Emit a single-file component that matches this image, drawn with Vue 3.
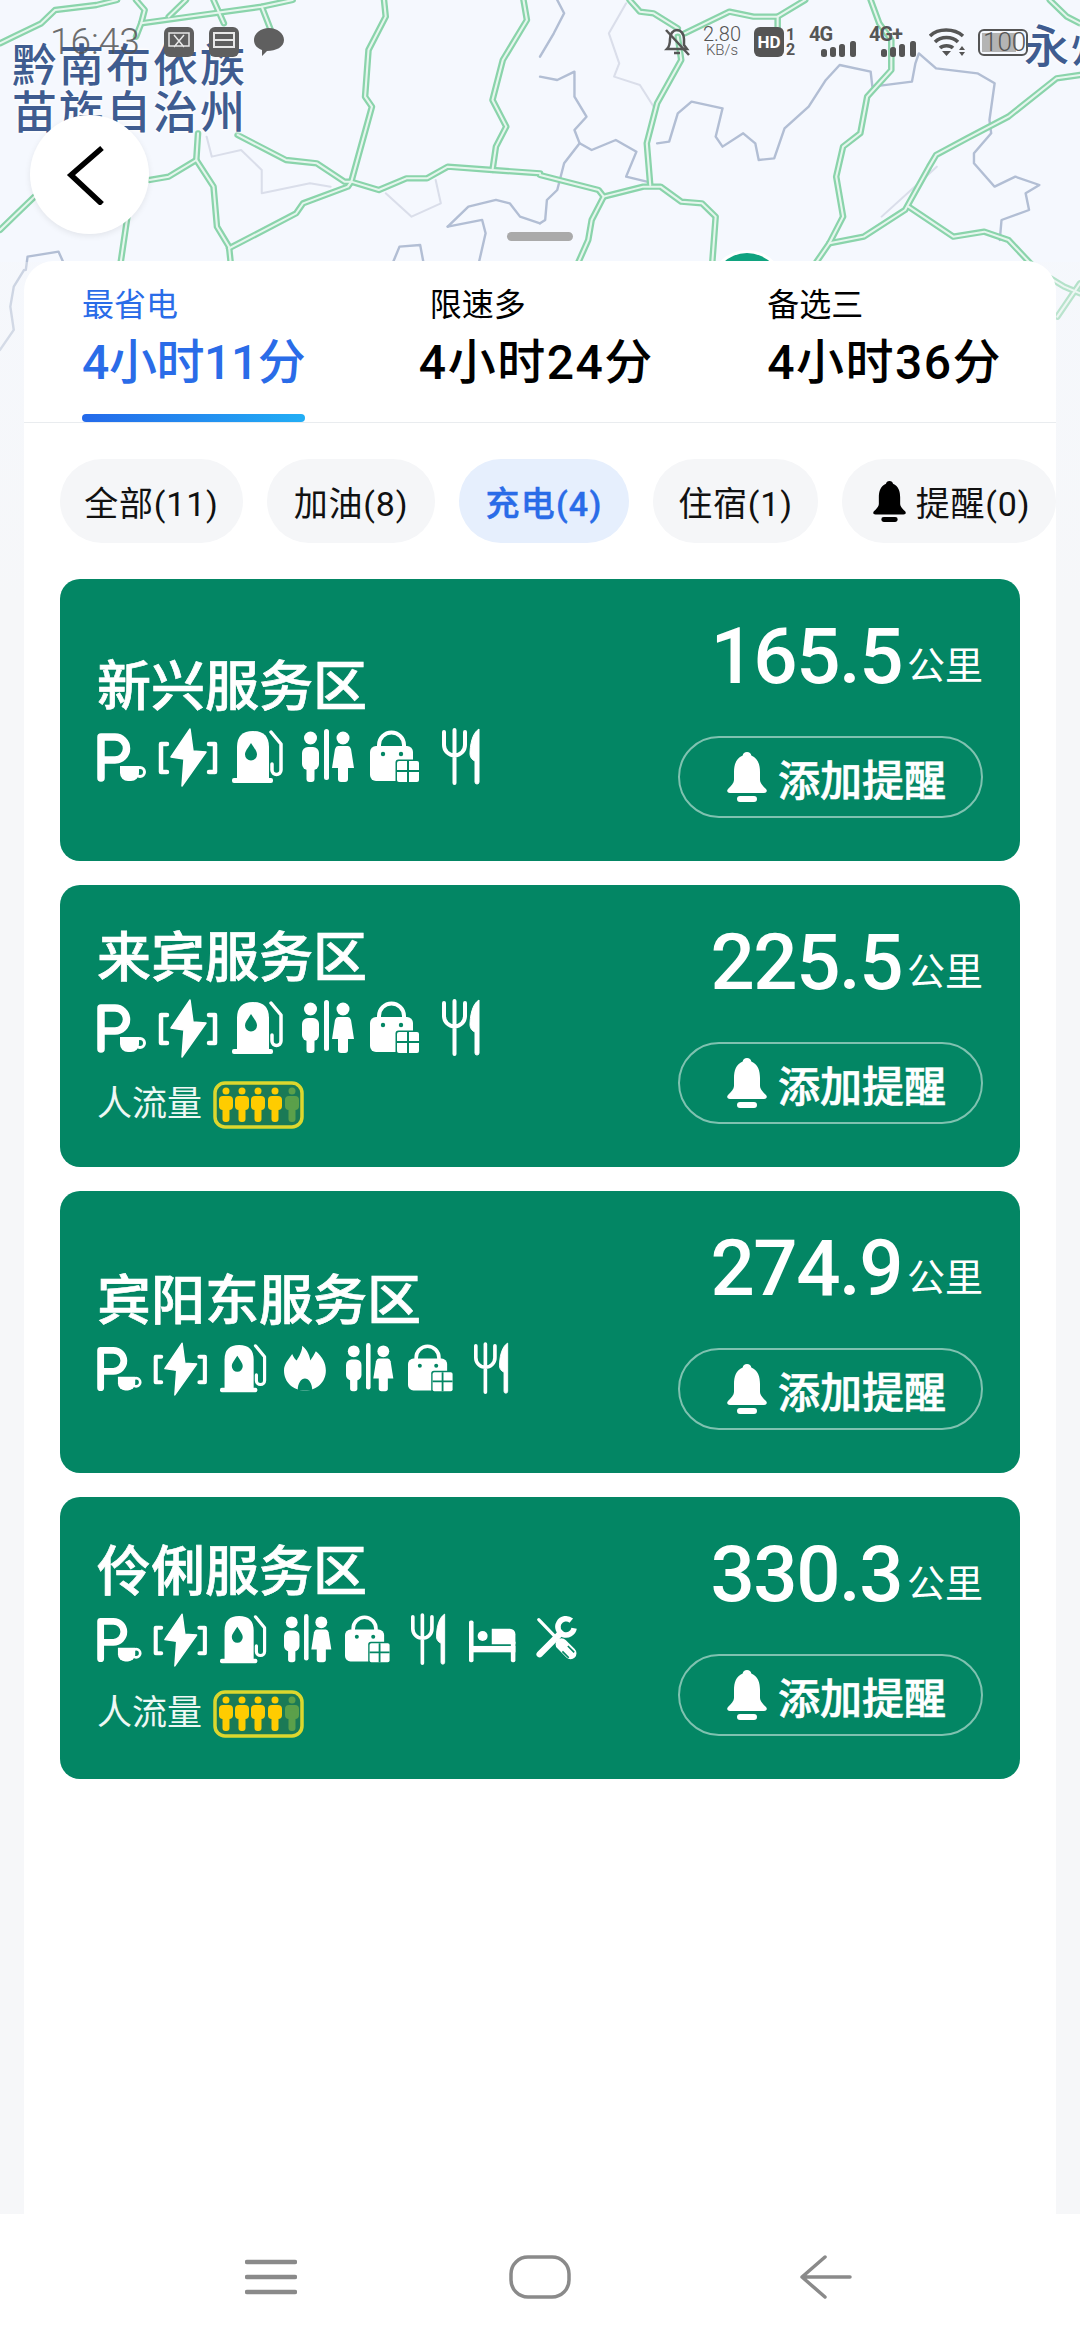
<template>
  <div class="screen">
    <!-- map canvas, runs behind the whole sheet and shows at the sides -->
    <svg class="map" width="1080" height="900" viewBox="0 0 1080 900">
      <g transform="scale(0.3444 0.3333)" fill="none" stroke-linejoin="round" stroke-linecap="round">
        <g stroke="#dadeea" stroke-width="6">
          <path v-for="(d, i) in thinLines" :key="i" :d="d" />
        </g>
        <g stroke="#b2bed4" stroke-width="7">
          <path v-for="(d, i) in borderLines" :key="i" :d="d" />
        </g>
        <g stroke="#8ad4ab" stroke-width="19">
          <path v-for="(d, i) in roads" :key="i" :d="d" />
        </g>
        <g stroke="#e6f6ee" stroke-width="6">
          <path v-for="(d, i) in roads" :key="i" :d="d" />
        </g>
      </g>
      <circle cx="747" cy="288" r="38" fill="#fff" />
      <circle cx="747" cy="288" r="35" fill="#10a37f" />
    </svg>
    <div class="map-fade"></div>

    <svg width="0" height="0" class="defs">
      <defs>
        <g id="i-park">
          <path d="M4 50V9H18a11.500 11.500 0 0 1 0 23H6" fill="none" stroke="#fff" stroke-width="7.500" stroke-linecap="round" stroke-linejoin="round" />
          <path d="M23 38H42V45a8 8 0 0 1-8 8H31a8 8 0 0 1-8-8z" fill="#fff" />
          <circle cx="43" cy="44" r="4.500" fill="none" stroke="#fff" stroke-width="3" />
        </g>
        <g id="i-charge">
          <path d="M9 16H3V44H9M51 16H57V44H51" fill="none" stroke="#fff" stroke-width="4.500" stroke-linecap="round" stroke-linejoin="round" />
          <path d="M32 1L13 29L26 31L24 58L48 24L35 23z" fill="#fff" stroke="#fff" stroke-width="1.500" stroke-linejoin="round" />
        </g>
        <g id="i-pump">
          <path d="M5 51V19Q5 3 21 3Q37 3 37 19V51z" fill="#fff" />
          <rect x="0" y="50" width="41" height="5" rx="2" fill="#fff" />
          <path d="M19 15c3 5 6 8 6 11.500a6 6 0 0 1-12 0c0-3.500 3-6.500 6-11.500z" fill="#038664" />
          <path d="M39 4L49 16V42a4.500 4.500 0 0 1-9 0V36" fill="none" stroke="#fff" stroke-width="3.500" stroke-linecap="round" stroke-linejoin="round" />
        </g>
        <g id="i-flame">
          <path d="M20 4C27 10 28 16 29 20C31 17 33 14 35 10C42 16 46 23 46 31C46 44 36 53 23 53C10 53 0 44 0 31C0 24 5 19 9 13C11 17 12 19 14 20C17 15 20 10 20 4z" fill="#fff" />
          <path d="M15 53C15 45 19 40 23 40C27 40 31 45 31 53z" fill="#038664" />
        </g>
        <g id="i-wc">
          <circle cx="8.500" cy="10" r="6.500" fill="#fff" />
          <rect x="0" y="19" width="17" height="23" rx="6" fill="#fff" />
          <rect x="4.500" y="30" width="8" height="24" rx="3" fill="#fff" />
          <rect x="22" y="1" width="5" height="51" rx="2.500" fill="#fff" />
          <circle cx="41" cy="10" r="6.500" fill="#fff" />
          <path d="M36 18H46Q48 18 49 21L52 40H30L33 21Q34 18 36 18z" fill="#fff" />
          <rect x="36" y="36" width="10" height="18" rx="3" fill="#fff" />
        </g>
        <g id="i-shop">
          <path d="M9 20V17a12.500 12.500 0 0 1 25 0V20" fill="none" stroke="#fff" stroke-width="4" />
          <rect x="0" y="18" width="43" height="35" rx="6" fill="#fff" />
          <circle cx="13" cy="26" r="2.200" fill="#038664" />
          <circle cx="31" cy="26" r="2.200" fill="#038664" />
          <rect x="25.500" y="31.500" width="25" height="24" rx="3" fill="#038664" />
          <rect x="27" y="33" width="22" height="21" rx="2" fill="#fff" />
          <path d="M38 33V54M27 43H49" stroke="#038664" stroke-width="2" />
        </g>
        <g id="i-food">
          <path d="M2 4V17a10.500 10.500 0 0 0 21 0V4M12.500 2V55" fill="none" stroke="#fff" stroke-width="4" stroke-linecap="round" />
          <path d="M37 1C30 5 28 18 28 26C28 29 30 32 33 33V54a2 2 0 0 0 4 0z" fill="#fff" stroke="#fff" stroke-linejoin="round" />
        </g>
        <g id="i-bed">
          <rect x="0" y="8" width="5" height="46" rx="2" fill="#fff" />
          <rect x="46" y="30" width="5" height="24" rx="2" fill="#fff" />
          <circle cx="15" cy="25" r="5.500" fill="#fff" />
          <path d="M25 17H45a6 6 0 0 1 6 6V34H25z" fill="#fff" />
          <rect x="0" y="36" width="51" height="7" fill="#fff" />
        </g>
        <g id="i-tools">
          <path d="M3 7L26 31" stroke="#fff" stroke-width="3.500" stroke-linecap="round" />
          <path d="M28 34L38 44" stroke="#fff" stroke-width="13" stroke-linecap="round" />
          <path d="M29 42L36 49M35 36L42 43" stroke="#038664" stroke-width="1.800" />
          <path d="M4 45L27 22" stroke="#fff" stroke-width="7" stroke-linecap="round" />
          <path d="M38.800 8.100A9 9 0 1 0 41.900 16.600" fill="none" stroke="#fff" stroke-width="6" />
        </g>
        <path id="i-bell" d="M20 0c2.500 0 4 1.500 4.300 3.500C31 6 33 13 33 20v8c0 3 3 6 6 9 1.500 1.500 1 4-2 4H3c-3 0-3.500-2.500-2-4 3-3 6-6 6-9v-8C7 13 9 6 15.700 3.500 16 1.500 17.500 0 20 0zM13 44h14a2.500 2.500 0 0 1 0 6H13a2.500 2.500 0 0 1 0-6z" />
      </defs>
    </svg>

    <header class="map-head">
      <div class="place place-left">黔南布依族<br />苗族自治州</div>
      <div class="place place-right">永州市</div>
      <div class="handle"></div>
      <button class="back" aria-label="返回">
        <svg width="40" height="60" viewBox="0 0 40 60">
          <path d="M36 3L5 30L36 59" fill="none" stroke="#000" stroke-width="5.500" />
        </svg>
      </button>

      <div class="status">
        <div class="status-left">
          <span class="clock">16:43</span>
          <svg width="30" height="30" viewBox="0 0 30 30">
            <rect width="30" height="30" rx="6" fill="#5f5f5f" />
            <path d="M5 6H25V19H5zM10 8L20 20M20 8L10 20" fill="none" stroke="#e8e8e8" stroke-width="1.500" />
          </svg>
          <svg width="30" height="30" viewBox="0 0 30 30">
            <rect width="30" height="30" rx="6" fill="#5f5f5f" />
            <path d="M5 6H25V20H5zM5 13H25" fill="none" stroke="#e8e8e8" stroke-width="2" />
          </svg>
          <svg width="30" height="30" viewBox="0 0 30 30">
            <path d="M15 1C23 1 30 6 30 13C30 20 22 24 13 24L8 29L8 23C3 21 0 18 0 13C0 6 7 1 15 1z" fill="#5f5f5f" />
          </svg>
        </div>
        <div class="status-right">
          <svg width="26" height="30" viewBox="0 0 26 30">
            <path d="M3 22C6 19 6 16 6 12C6 7 9 3 13 3C17 3 20 7 20 12V18L23 22zM10 26H16" fill="none" stroke="#555" stroke-width="2.500" />
            <path d="M2 3L25 28" stroke="#555" stroke-width="2.500" />
          </svg>
          <div class="speed"><span>2.80</span><small>KB/s</small></div>
          <div class="hd">
            <b>HD</b>
            <i>1<br />2</i>
          </div>
          <div class="net" v-for="n in ['4G', '4G+']" :key="n">
            <b>{{ n }}</b>
            <svg width="35" height="16" viewBox="0 0 35 16">
              <rect x="0" y="8" width="6" height="8" rx="2.500" fill="#555" />
              <rect x="9" y="6" width="6" height="10" rx="2.500" fill="#555" />
              <rect x="18" y="3" width="6" height="13" rx="2.500" fill="#555" />
              <rect x="29" y="0" width="6" height="16" rx="2.500" fill="#555" />
            </svg>
          </div>
          <svg width="36" height="30" viewBox="0 0 36 30">
            <path d="M1 9C9 1 25 1 34 9M6 15C12 9 23 9 29 15M11 21C14 18 21 18 24 21" fill="none" stroke="#555" stroke-width="3.500" />
            <path d="M13 24H22L17.500 29zM30 23L33 19L36 23zM30 25H36L33 29z" fill="#555" />
          </svg>
          <div class="battery">
            <div class="battery-fill"></div>
            <span>100</span>
          </div>
        </div>
      </div>
    </header>

    <main class="sheet">
      <nav class="tabs">
        <div v-for="t in routes" :key="t.label" class="tab" :class="{ on: t.active, indent: t.indent }">
          <div class="tab-label">{{ t.label }}</div>
          <div class="tab-time">{{ t.time }}</div>
          <div class="tab-bar"></div>
        </div>
      </nav>

      <div class="chips">
        <div v-for="c in chips" :key="c.text" class="chip" :class="{ on: c.active, bell: c.bell }" :style="{ width: c.w + 'px' }">
          <svg v-if="c.bell" class="chip-bell" width="33" height="41" viewBox="0 0 40 50"><use href="#i-bell" fill="#000" /></svg>
          {{ c.text }}
        </div>
      </div>

      <section class="list">
        <article v-for="s in stops" :key="s.name" class="card">
          <div class="card-left">
            <div class="name">{{ s.name }}</div>
            <div class="icons">
              <svg
                v-for="ic in s.icons"
                :key="ic"
                :width="adv[ic] * (s.small ? 0.91 : 1)"
                :height="s.small ? 55 : 60"
                :viewBox="`0 0 ${adv[ic]} 60`"
              >
                <use :href="`#i-${ic}`" />
              </svg>
            </div>
            <div v-if="s.crowd" class="crowd">
              <span>人流量</span>
              <svg width="91" height="48" viewBox="0 0 91 48">
                <rect x="2" y="2" width="87" height="44" rx="10" fill="#1a7a56" stroke="#dcd72e" stroke-width="3.500" />
                <g v-for="(cx, i) in crowdX" :key="cx" :fill="i < 4 ? '#ffcc00' : '#5ba04a'">
                  <circle :cx="cx" cy="10" r="3.500" />
                  <rect :x="cx - 7" y="15" width="14" height="14" rx="4" />
                  <rect :x="cx - 3.500" y="20" width="7" height="21" rx="3" />
                </g>
              </svg>
            </div>
          </div>
          <div class="card-right">
            <div class="dist"><b>{{ s.km }}</b><span>公里</span></div>
            <button class="remind">
              <svg width="40" height="50" viewBox="0 0 40 50"><use href="#i-bell" fill="#fff" /></svg>
              添加提醒
            </button>
          </div>
        </article>
      </section>
    </main>

    <footer class="navbar">
      <svg class="nav-menu" width="52" height="36" viewBox="0 0 52 36">
        <path d="M2 3H50M2 18H50M2 33H50" stroke="#8a8a8a" stroke-width="4.500" stroke-linecap="round" />
      </svg>
      <svg class="nav-home" width="62" height="44" viewBox="0 0 62 44">
        <rect x="2" y="2" width="58" height="40" rx="17" fill="none" stroke="#8a8a8a" stroke-width="3.500" />
      </svg>
      <svg class="nav-back" width="52" height="44" viewBox="0 0 52 44">
        <path d="M25 2L2 22L25 42M2 22H50" fill="none" stroke="#8a8a8a" stroke-width="3.500" stroke-linecap="round" stroke-linejoin="round" />
      </svg>
    </footer>
  </div>
</template>

<script setup>
// map lines are traced off the reference in crop coordinates, left half then right half (+1568)
const roads = [
  'M0 130L40 110L120 70L160 30L280 15L340 0',
  'M395 0L420 30L410 70L395 110',
  'M575 400L570 480L490 530L435 540',
  'M100 590L50 640L0 690',
  'M570 480L620 560L630 680L665 740L670 790',
  'M665 745L860 640L880 610L1010 560L1020 545',
  'M690 405L830 480L920 490L1000 545L1020 545',
  'M1020 545L1080 320L1060 290L1070 150L1120 50L1115 0',
  'M1020 545L1100 570L1180 535L1240 535L1300 500L1430 510L1568 520',
  'M1430 510L1440 440L1470 380L1430 300L1460 180L1530 60L1520 0',
  'M410 70L620 40L760 20L850 0',
  'M490 50L540 0M620 0L650 70M760 20L790 100',
  'M350 790L370 650',
  'M1568 525L1738 570L1753 590L1868 560L1918 560L1978 605L2038 610L2078 650L2068 790',
  'M1753 590L1718 660L1708 720L1678 790',
  'M1888 555L1878 430L1908 310L1978 180L1968 110',
  'M1988 100L2118 35L2188 50L2258 50L2338 0',
  'M1828 0L1858 35L1898 40L1968 85',
  'M2258 50L2258 100',
  'M2528 0L2553 70L2588 120L2588 210L2518 290L2498 400L2448 440L2428 530L2448 650L2408 730L2368 790',
  'M2408 730L2508 710L2628 630L2698 500L2718 465L2808 415L2928 350L3068 235L3136 225',
  'M2638 620L2768 710L2858 695L2928 720L3010 810',
  'M3048 0L3098 50L3136 70',
  'M3010 810L3090 860L3136 880M3070 950L3136 850',
]

const borderLines = [
  'M1618 0L1638 40L1608 100L1568 170',
  'M1568 230L1618 240L1668 215L1668 290L1703 350L1668 390L1683 430L1718 450L1788 420L1848 455L1818 530L1878 545',
  'M1683 430L1638 490L1618 570L1588 600L1583 660L1568 670',
  'M1908 430L1943 425L1968 340L2008 305L2098 325L2078 410L2098 440L2158 400L2193 430L2203 480L2248 475L2278 385L2348 320L2398 240L2438 195L2528 215L2533 260L2648 245L2658 190L2668 160L2718 205L2838 220L2888 250L2873 360L2878 400L2828 460L2828 490L2888 560L2948 530L3018 555L2978 580L2988 630L2908 660L2903 720',
  'M1300 680L1360 620L1440 600L1480 610L1510 650L1568 670',
  'M1300 680L1400 660L1410 700L1390 790',
  'M1140 790L1160 740L1220 735L1230 790',
  'M75 810L80 770L170 755L185 790',
  'M70 810L40 860L30 920L40 990L0 1050',
]

const thinLines = [
  'M600 410L615 470L700 450L760 510L760 580L900 550L960 560',
  'M1120 580L1195 650L1280 610L1265 540',
  'M1818 10L1768 100L1798 190L1783 230L1858 255L1898 320',
  'M2368 790L2470 790M2560 650L2720 500',
]

const adv = { park: 61, charge: 74, pump: 70, flame: 69, wc: 68, shop: 72, food: 64, bed: 73, tools: 48 }
const crowdX = [13, 29, 45, 62, 79]

const routes = [
  { label: '最省电', time: '4小时11分', active: true },
  { label: '限速多', time: '4小时24分', indent: true },
  { label: '备选三', time: '4小时36分' },
]

const chips = [
  { text: '全部(11)', w: 183 },
  { text: '加油(8)', w: 168 },
  { text: '充电(4)', w: 170, active: true },
  { text: '住宿(1)', w: 165 },
  { text: '提醒(0)', w: 214, bell: true },
]

const base = ['park', 'charge', 'pump', 'wc', 'shop', 'food']

const stops = [
  { name: '新兴服务区', km: '165.5', icons: base },
  { name: '来宾服务区', km: '225.5', icons: base, crowd: true },
  { name: '宾阳东服务区', km: '274.9', icons: ['park', 'charge', 'pump', 'flame', 'wc', 'shop', 'food'], small: true },
  { name: '伶俐服务区', km: '330.3', icons: [...base, 'bed', 'tools'], small: true, crowd: true },
]
</script>

<style scoped>
.screen {
  position: relative;
  width: 1080px;
  height: 2340px;
  overflow: hidden;
  display: flex;
  flex-direction: column;
  background: #f5f8fe;
  font-family: Roboto, "Noto Sans CJK SC", sans-serif;
  color: #111;
}
.map {
  position: absolute;
  left: 0;
  top: 0;
}
.map-fade {
  position: absolute;
  left: 0;
  right: 0;
  top: 262px;
  bottom: 0;
  background: linear-gradient(rgba(246, 247, 249, 0.35), #f6f7f9 340px);
}
.defs {
  position: absolute;
}

.map-head {
  position: relative;
  flex: 0 0 261px;
}
.place {
  position: absolute;
  font-family: "Noto Sans CJK SC", sans-serif;
  font-size: 45px;
  font-weight: 500;
  line-height: 47px;
  letter-spacing: 2px;
  color: #3f5c90;
  white-space: nowrap;
  text-shadow: 0 0 3px #fff, 0 0 3px #fff, 0 0 4px #fff;
}
.place-left {
  left: 12px;
  top: 39px;
}
.place-right {
  left: 1024px;
  top: 20px;
}
.handle {
  position: absolute;
  left: 507px;
  top: 232px;
  width: 66px;
  height: 9px;
  border-radius: 5px;
  background: #aaa;
}
.back {
  position: absolute;
  left: 30px;
  top: 115px;
  width: 119px;
  height: 119px;
  padding: 0 8px 0 0;
  border: none;
  border-radius: 50%;
  background: #fff;
  box-shadow: 0 2px 6px rgba(0, 0, 0, 0.08);
  display: flex;
  align-items: center;
  justify-content: center;
}

.status {
  position: absolute;
  left: 0;
  right: 0;
  top: 27px;
  height: 30px;
  display: flex;
  justify-content: space-between;
  padding: 0 52px 0 50px;
  color: #555;
}
.status-left {
  display: flex;
  align-items: center;
  gap: 15px;
}
.clock {
  font-size: 37px;
  font-weight: 300;
  line-height: 30px;
  width: 99px;
  opacity: 0.85;
}
.status-right {
  display: flex;
  align-items: center;
  gap: 13px;
}
.speed {
  width: 38px;
  display: flex;
  flex-direction: column;
  align-items: center;
  line-height: 16px;
  font-size: 20px;
  font-weight: 300;
}
.speed small {
  font-size: 15px;
}
.hd {
  display: flex;
  align-items: center;
  gap: 2px;
}
.hd b {
  width: 30px;
  height: 30px;
  border-radius: 6px;
  background: #555;
  color: #fff;
  font-size: 17px;
  line-height: 30px;
  text-align: center;
}
.hd i {
  font-style: normal;
  font-weight: 700;
  font-size: 16px;
  line-height: 15px;
  width: 10px;
}
.net {
  position: relative;
  width: 47px;
  height: 30px;
}
.net b {
  position: absolute;
  left: 0;
  top: -2px;
  font-size: 20px;
  letter-spacing: -1px;
  line-height: 18px;
}
.net svg {
  position: absolute;
  right: 0;
  bottom: 0;
}
.battery {
  position: relative;
  width: 50px;
  height: 27px;
  border: 2.5px solid #555;
  border-radius: 6px;
  box-sizing: border-box;
  padding: 2px;
}
.battery-fill {
  height: 100%;
  width: 80%;
  background: #b4b4b4;
}
.battery span {
  position: absolute;
  left: 3px;
  top: -2px;
  font-size: 26px;
  font-weight: 300;
  line-height: 26px;
}

.sheet {
  position: relative;
  flex: 1;
  margin: 0 24px;
  background: #fff;
  border-radius: 30px 30px 0 0;
  overflow: hidden;
}
.tabs {
  height: 162px;
  box-sizing: border-box;
  padding: 24px 54px 0 58px;
  display: flex;
  justify-content: space-between;
  border-bottom: 1px solid #e9ecef;
}
.tab {
  display: flex;
  flex-direction: column;
  color: #000;
}
.tab-label {
  font-size: 32px;
  line-height: 40px;
}
.tab.indent .tab-label {
  padding-left: 11px;
}
.tab-time {
  margin-top: 6px;
  font-size: 48px;
  font-weight: 500;
  line-height: 64px;
  letter-spacing: 1.5px;
}
.tab-bar {
  margin-top: 19px;
  height: 9px;
  border-radius: 5px;
}
.tab.on {
  color: #2a6ce8;
}
.tab.on .tab-time {
  letter-spacing: -0.4px;
}
.tab.on .tab-bar {
  background: linear-gradient(90deg, #2469ea, #22aef5);
}

.chips {
  margin-top: 36px;
  padding-left: 36px;
  display: flex;
  gap: 24px;
  white-space: nowrap;
}
.chip {
  flex: none;
  height: 84px;
  border-radius: 42px;
  background: #f5f6f8;
  display: flex;
  align-items: center;
  justify-content: center;
  font-size: 34px;
  letter-spacing: 0.8px;
  color: #111;
}
.chip.on {
  background: #e6effd;
  color: #2a6ce8;
  font-weight: 500;
  letter-spacing: 1.2px;
  -webkit-text-stroke: 0.4px #2a6ce8;
}
.chip.bell {
  padding-left: 5px;
  box-sizing: border-box;
}
.chip-bell {
  margin-right: 10px;
}

.list {
  margin-top: 36px;
  padding: 0 36px;
  display: flex;
  flex-direction: column;
  gap: 24px;
}
.card {
  height: 282px;
  box-sizing: border-box;
  padding: 0 37px;
  border-radius: 20px;
  background: #038664;
  color: #fff;
  display: flex;
  justify-content: space-between;
}
.card-left {
  display: flex;
  flex-direction: column;
  justify-content: center;
}
.name {
  font-size: 54px;
  font-weight: 500;
  line-height: 70px;
  -webkit-text-stroke: 0.7px #fff;
}
.icons {
  margin-top: 5px;
  display: flex;
}
.icons svg {
  display: block;
}
.crowd {
  margin-top: 22px;
  display: flex;
  align-items: center;
  gap: 11px;
  font-size: 35px;
  line-height: 48px;
  color: #eef8f4;
}
.card-right {
  padding: 32px 0 43px;
  display: flex;
  flex-direction: column;
  justify-content: space-between;
  align-items: flex-end;
}
.dist {
  line-height: 92px;
  height: 92px;
  white-space: nowrap;
}
.dist b {
  font-size: 78px;
  font-weight: 500;
  letter-spacing: -1.500px;
}
.dist span {
  margin-left: 5px;
  font-size: 38px;
  vertical-align: 4px;
}
.remind {
  width: 305px;
  height: 82px;
  box-sizing: border-box;
  padding: 0 0 0 12px;
  border: 2.5px solid #7fc2b0;
  border-radius: 41px;
  background: none;
  color: #fff;
  font-family: inherit;
  font-size: 42px;
  font-weight: 500;
  -webkit-text-stroke: 0.6px #fff;
  display: flex;
  align-items: center;
  justify-content: center;
  gap: 11px;
}

.navbar {
  position: relative;
  flex: 0 0 126px;
  background: #fff;
  display: flex;
  align-items: center;
  padding: 0 0 0 245px;
}
.nav-home {
  margin-left: 212px;
}
.nav-back {
  margin-left: 229px;
}
</style>

<style>
html,
body {
  margin: 0;
  padding: 0;
  background: #fff;
}
</style>
